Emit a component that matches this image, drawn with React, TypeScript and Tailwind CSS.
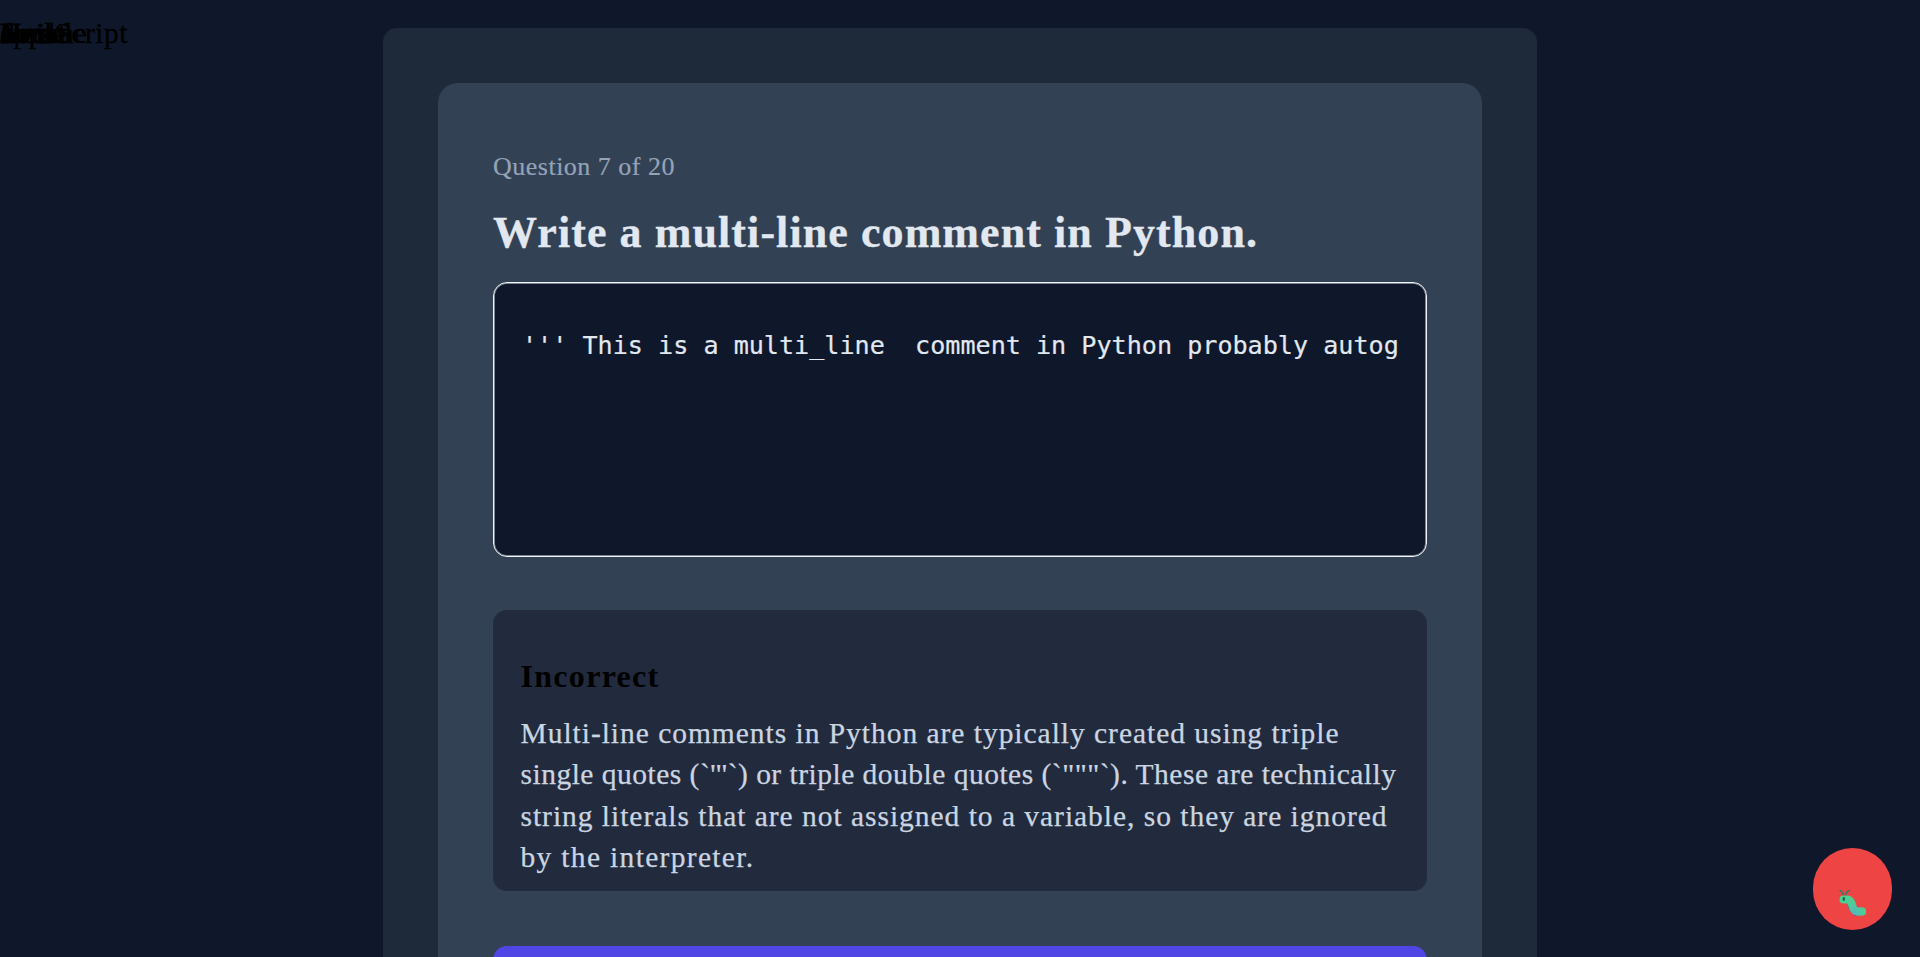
const keywords = [
  { text: "JavaScript", tracking: "tracking-[0.5px]" },
  { text: "apple", tracking: "tracking-[0.5px]" },
  { text: "double", tracking: "tracking-[1.3px]" },
  { text: "Hoist", tracking: "tracking-[0.5px]" },
  { text: "Union", tracking: "tracking-[0px]" },
  { text: "None", tracking: "tracking-[0px]" },
];

const explanation = [
  { text: "Multi-line comments in Python are typically created using triple", tracking: "tracking-[0.969px]" },
  { text: "single quotes (`'''`) or triple double quotes (`\"\"\"`). These are technically", tracking: "tracking-[0.49px]" },
  { text: "string literals that are not assigned to a variable, so they are ignored", tracking: "tracking-[0.971px]" },
  { text: "by the interpreter.", tracking: "tracking-[1.322px]" },
];

function Caterpillar() {
  return (
    <svg viewBox="0 0 28 28" className="h-7 w-7" fill="none">
      <defs>
        <linearGradient id="body" x1="6" y1="5" x2="17" y2="27" gradientUnits="userSpaceOnUse">
          <stop offset="0" stopColor="#46d68c" />
          <stop offset="0.55" stopColor="#4fc99b" />
          <stop offset="1" stopColor="#5aaed0" />
        </linearGradient>
        <linearGradient id="tail" x1="15" y1="0" x2="25" y2="0" gradientUnits="userSpaceOnUse">
          <stop offset="0" stopColor="#46d68c" stopOpacity="0" />
          <stop offset="1" stopColor="#4bd18c" />
        </linearGradient>
      </defs>
      <path d="M4.500 6.500C4 4 2.500 2 1 1.500M6.500 6.500C7 4 8.500 2 10.500 1.500" stroke="#3e7566" strokeWidth="1.6" strokeLinecap="round" />
      <path d="M9.500 15l1 4M11 18l2 5M14.500 24l2 2" stroke="#35558a" strokeWidth="2" strokeLinecap="round" />
      <path d="M4.500 10.500H8C14.500 10.500 12.500 22.500 17.500 22.500H23" stroke="url(#body)" strokeWidth="8" strokeLinecap="round" strokeLinejoin="round" />
      <path d="M17.500 22.500H23" stroke="url(#tail)" strokeWidth="8" strokeLinecap="round" />
      <ellipse cx="4.800" cy="10" rx="1.100" ry="2" fill="#274c4b" />
    </svg>
  );
}

export default function App() {
  return (
    <div className="relative h-[957px] overflow-hidden bg-[#0f172a] font-['Liberation_Serif','Times_New_Roman',serif]">
      {keywords.map((word) => (
        <span
          key={word.text}
          className={`absolute left-0 top-[13px] text-[29.5px] leading-[41px] text-black [-webkit-text-stroke:0.3px] ${word.tracking}`}
        >
          {word.text}
        </span>
      ))}

      <main className="mx-auto mt-7 w-[1154px] rounded-[14px] bg-[#1e293a] px-[55px] pt-[55px]">
        <section className="h-[1000px] rounded-[20px] bg-[#334155] px-[55px] pt-[63px]">
          <p className="text-[26px] leading-[41px] tracking-[0.497px] text-[#94a3b8] [-webkit-text-stroke:0.2px]">
            Question 7 of 20
          </p>
          <h1 className="mt-[18px] whitespace-nowrap text-[44px] font-bold leading-[56px] tracking-[1.078px] text-[#e2e8f0] [-webkit-text-stroke:0.3px]">
            Write a multi-line comment in Python.
          </h1>

          <div className="mt-[21px] h-[275px] overflow-hidden rounded-[14px] border border-[#f1f5f9] bg-[#0f172a] px-[28px] pt-[42px] shadow-[inset_0_0_0_1px_#7d8491]">
            <pre className="overflow-hidden font-['DejaVu_Sans_Mono',monospace] text-[25.12px] leading-[41px] text-[#e2e8f0] [-webkit-text-stroke:0.2px]">
              {"''' This is a multi_line  comment in Python probably autog"}
            </pre>
          </div>

          <div className="mt-[53px] h-[281px] rounded-[14px] bg-[#212b3d] px-[27.5px] pt-[46px]">
            <h2 className="text-[32px] font-bold leading-[41px] tracking-[1.295px] text-black">Incorrect</h2>
            <div className="mt-4 text-[29.5px] leading-[41.25px] text-[#cbd5e1] [-webkit-text-stroke:0.25px]">
              {explanation.map((line) => (
                <p key={line.text} className={`whitespace-nowrap ${line.tracking}`}>
                  {line.text}
                </p>
              ))}
            </div>
          </div>

          <button className="mt-[55px] block h-[72px] w-full rounded-[14px] bg-[#4f46e5]" aria-label="Next" />
        </section>
      </main>

      <button
        aria-label="Report a bug"
        className="absolute bottom-[27px] right-[28px] flex h-[82px] w-[79px] items-end justify-center rounded-full bg-[#ef4444] pb-[13px]"
      >
        <Caterpillar />
      </button>
    </div>
  );
}
